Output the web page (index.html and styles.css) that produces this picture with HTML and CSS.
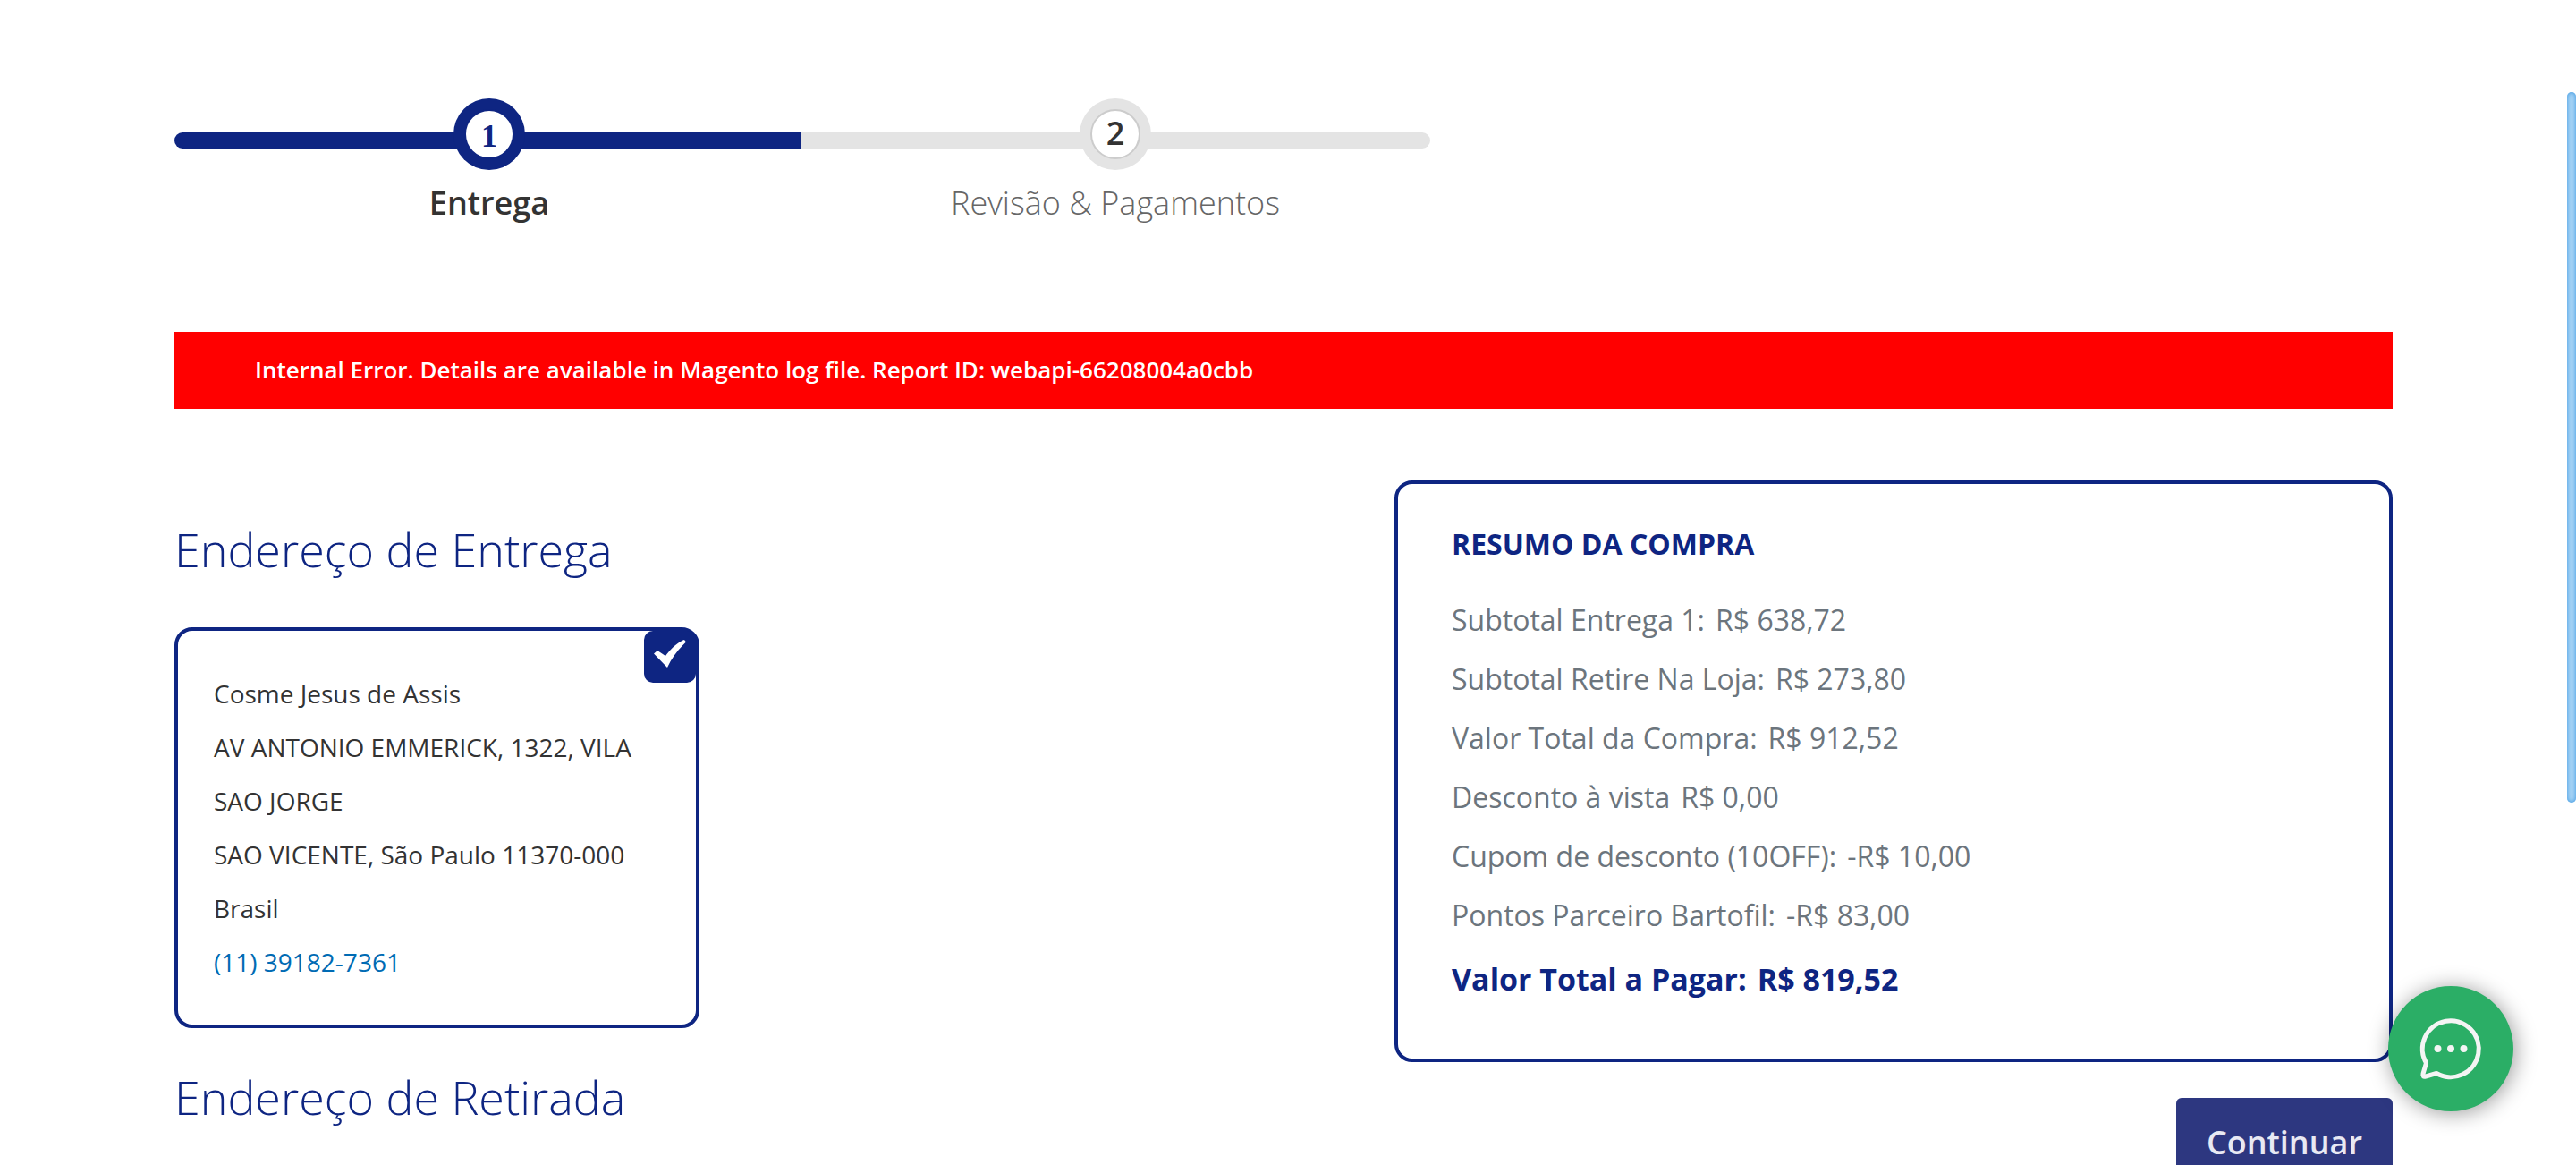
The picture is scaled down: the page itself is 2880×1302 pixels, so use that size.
FILE: index.html
```html
<!DOCTYPE html>
<html lang="pt-BR">
<head>
<meta charset="utf-8">
<meta name="viewport" content="width=device-width, initial-scale=1">
<title>Finalizar compra</title>
<link rel="stylesheet" href="styles.css">
</head>
<body>
<main class="checkout">
  <ol class="steps">
    <li class="step step-active">
      <span class="step-marker"><span class="step-number">1</span></span>
      <span class="step-label">Entrega</span>
    </li>
    <li class="step">
      <span class="step-marker"><span class="step-number">2</span></span>
      <span class="step-label">Revisão &amp; Pagamentos</span>
    </li>
  </ol>

  <div class="message" role="alert">Internal Error. Details are available in Magento log file. Report ID: webapi-66208004a0cbb</div>

  <div class="columns">
    <div class="shipping">
      <h2 class="section-title">Endereço de Entrega</h2>
      <address class="address-card">
        <span class="address-check">
          <svg viewBox="0 0 58 58" aria-hidden="true"><path d="M11 25.500 L15 22 L24 28 C30 20 37 13 45 10 L47 12.500 C38 21 31 30 26 41 Z"/></svg>
        </span>
        Cosme Jesus de Assis<br>
        AV ANTONIO EMMERICK, 1322, VILA SAO JORGE<br>
        SAO VICENTE, São Paulo 11370-000<br>
        Brasil<br>
        <a class="phone" href="tel:11391827361">(11) 39182-7361</a>
      </address>
      <h2 class="section-title section-title-next">Endereço de Retirada</h2>
    </div>

    <aside class="sidebar">
      <section class="summary">
        <h3 class="summary-title">RESUMO DA COMPRA</h3>
        <dl class="totals">
          <div class="total-row"><dt>Subtotal Entrega 1:</dt><dd>R$ 638,72</dd></div>
          <div class="total-row"><dt>Subtotal Retire Na Loja:</dt><dd>R$ 273,80</dd></div>
          <div class="total-row"><dt>Valor Total da Compra:</dt><dd>R$ 912,52</dd></div>
          <div class="total-row"><dt>Desconto à vista</dt><dd>R$ 0,00</dd></div>
          <div class="total-row"><dt>Cupom de desconto (10OFF):</dt><dd>-R$ 10,00</dd></div>
          <div class="total-row"><dt>Pontos Parceiro Bartofil:</dt><dd>-R$ 83,00</dd></div>
          <div class="total-row total-final"><dt>Valor Total a Pagar:</dt><dd>R$ 819,52</dd></div>
        </dl>
      </section>
      <button class="continue" type="submit">Continuar</button>
    </aside>
  </div>
</main>

<button class="chat" type="button" aria-label="Abrir chat">
  <svg viewBox="0 0 140 140" aria-hidden="true">
    <path d="M42.500 86 A31.500 31.500 0 1 1 54 97.500 L42 101 Q38 102 39 98 Z" fill="none" stroke="#f4f4f4" stroke-width="5" stroke-linejoin="round"/>
    <circle cx="55.500" cy="70" r="4"/><circle cx="70" cy="70" r="4"/><circle cx="84.500" cy="70" r="4"/>
  </svg>
</button>
<div class="scroll-thumb"></div>
</body>
</html>
```
FILE: styles.css
```css
* {
  box-sizing: border-box;
}

body {
  margin: 0;
  height: 100vh;
  overflow: hidden;
  background: #fff;
  color: #333;
  font-family: "Open Sans", sans-serif;
  font-size: 28px;
}

.checkout {
  padding: 110px 205px 0 195px;
}

/* Progress steps */
.steps {
  display: flex;
  max-width: 1404px;
  margin: 0;
  padding: 0;
  list-style: none;
}

.step {
  flex: 1;
  display: flex;
  flex-direction: column;
  align-items: center;
  color: #666;
  font-size: 36px;
  font-weight: 300;
  line-height: 50px;
}

.step + .step {
  margin-left: -4px;
}

/* The track runs behind the marker */
.step::before {
  content: "";
  align-self: stretch;
  height: 18px;
  margin: 38px 0 -56px;
  background: #e4e4e4;
  border-radius: 0 9px 9px 0;
}

.step-active {
  color: #333;
  font-weight: 600;
}

.step-active::before {
  background: #0e2582;
  border-radius: 9px 0 0 9px;
}

.step-marker {
  z-index: 1;
  display: grid;
  place-items: center;
  width: 80px;
  height: 80px;
  border-radius: 50%;
  background: #e4e4e4;
}

.step-active .step-marker {
  background: #0e2582;
}

.step-number {
  width: 56px;
  height: 56px;
  border: 2px solid #ccc;
  border-radius: 50%;
  background: #fff;
  color: #333;
  font-weight: 600;
  line-height: 50px;
  text-align: center;
}

.step-active .step-number {
  border-color: #0e2582;
  color: #0e2582;
  font-family: "Liberation Serif", serif;
  font-weight: 700;
  line-height: 56px;
}

.step-label {
  margin-top: 12px;
}

/* Error message */
.message {
  margin-top: 119px;
  padding: 22px 90px 24px;
  background: #f00;
  color: #fff;
  font-size: 26px;
  font-weight: 600;
  line-height: 40px;
}

.columns {
  display: grid;
  grid-template-columns: 1fr 45%;
  margin-top: 80px;
}

/* Addresses */
.shipping {
  padding-top: 40px;
}

.section-title {
  margin: 0 0 50px;
  color: #0e2582;
  font-size: 52px;
  font-weight: 300;
  line-height: 74px;
}

.section-title-next {
  margin-top: 40px;
}

.address-card {
  position: relative;
  max-width: 587px;
  padding: 40px;
  border: 4px solid #0e2582;
  border-radius: 20px;
  font-style: normal;
  line-height: 60px;
}

.address-check {
  position: absolute;
  top: 0;
  right: 0;
  width: 58px;
  height: 58px;
  border-radius: 10px;
  background: #0e2582;
}

.address-check svg {
  display: block;
  fill: #fff;
}

.phone {
  color: #006bb4;
  text-decoration: none;
}

/* Order summary */
.sidebar {
  display: flex;
  flex-direction: column;
  align-items: flex-end;
  gap: 40px;
}

.summary {
  align-self: stretch;
  padding: 45px 60px 51px;
  border: 4px solid #0e2582;
  border-radius: 20px;
}

.summary-title {
  margin: 0 0 30px;
  color: #0e2582;
  font-size: 32px;
  font-weight: 700;
  line-height: 44px;
}

.totals {
  margin: 0;
  color: #6c757d;
  font-size: 32px;
  line-height: 66px;
}

.total-row {
  display: flex;
  gap: 12px;
}

.total-row dd {
  margin: 0;
}

.total-final {
  color: #0e2582;
  font-size: 34px;
  font-weight: 700;
  line-height: 76px;
}

.continue {
  padding: 25px 34px;
  border: 0;
  border-radius: 6px;
  background: #2d3780;
  color: #e8e9f3;
  font-family: inherit;
  font-size: 36px;
  font-weight: 600;
  line-height: 50px;
}

/* Floating chat button */
.chat {
  position: fixed;
  right: 70px;
  bottom: 60px;
  width: 140px;
  height: 140px;
  padding: 0;
  border: 0;
  border-radius: 50%;
  background: #2bae66;
  box-shadow: 2px 2px 24px rgba(0, 0, 0, 0.4);
}

.chat svg {
  display: block;
  fill: #f4f4f4;
}

.scroll-thumb {
  position: fixed;
  top: 103px;
  right: 0;
  width: 10px;
  height: 61vh;
  border-radius: 5px;
  background: #a6d3f5;
  box-shadow: inset 0 0 5px #3795e0;
}
```
